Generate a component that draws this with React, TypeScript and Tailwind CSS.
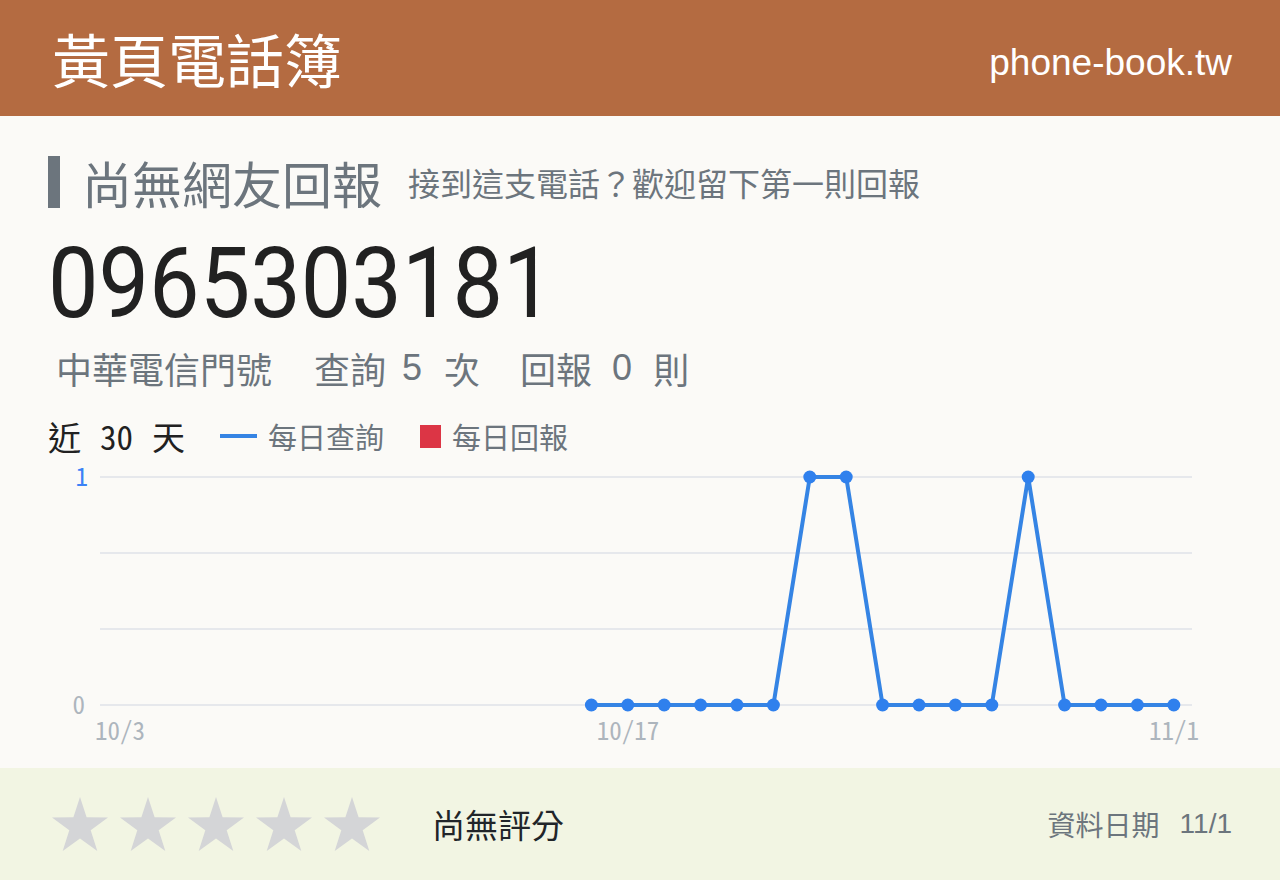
import React from "react";

const CJK = "font-['Noto_Sans_CJK_TC',sans-serif]";

// Daily lookups for the last 30 days (10/3 .. 11/1); null = no data yet
const lookups: (number | null)[] = [
  null, null, null, null, null, null, null, null, null, null, null, null, null,
  0, 0, 0, 0, 0, 0, 1, 1, 0, 0, 0, 0, 1, 0, 0, 0, 0,
];

function Chart() {
  const left = 52;
  const right = 1144;
  const top = 18;
  const bottom = 246;
  const step = (right - left) / lookups.length;
  const xAt = (i: number) => left + step * (i + 0.5);
  const yAt = (v: number) => bottom - (bottom - top) * v;
  const pts = lookups
    .map((v, i) => (v === null ? null : [xAt(i), yAt(v)] as [number, number]))
    .filter((p): p is [number, number] => p !== null);
  const grid = [0, 1, 2, 3].map((k) => top + ((bottom - top) / 3) * k);
  const font = "Noto Sans CJK TC, sans-serif";
  return (
    <svg width="1184" height="296" viewBox="0 0 1184 296" className="block">
      {grid.map((y) => (
        <line key={y} x1={left} x2={right} y1={y} y2={y} stroke="#e6e8ec" strokeWidth="2" />
      ))}
      <text x="40" y={top + 9} textAnchor="end" fontSize="25" fill="#3b82f6" fontFamily={font} style={{ fontFeatureSettings: "'hwid'" }}>1</text>
      <text x="37" y={bottom + 9} textAnchor="end" fontSize="25" fill="#adb5bd" fontFamily={font} style={{ fontFeatureSettings: "'hwid'" }}>0</text>
      {[
        ["10/3", 72],
        ["10/17", 580],
        ["11/1", 1126],
      ].map(([label, x]) => (
        <text
          key={label as string}
          x={x as number}
          y={281}
          textAnchor="middle"
          fontSize="25"
          fill="#adb5bd"
          fontFamily={font}
          style={{ fontFeatureSettings: "'hwid'" }}
        >
          {label}
        </text>
      ))}
      <polyline
        points={pts.map((p) => p.join(",")).join(" ")}
        fill="none"
        stroke="#3584e4"
        strokeWidth="4"
        strokeLinejoin="round"
      />
      {pts.map(([x, y], i) => (
        <circle key={i} cx={x} cy={y} r="6.5" fill="#2f80ed" />
      ))}
    </svg>
  );
}

function Star() {
  return (
    <svg width="56" height="54" viewBox="0 0 56 54">
      <polygon
        points="28,0 34.6,20.3 56,20.6 38.7,33.2 45.3,54 28,41.4 10.7,54 17.3,33.2 0,20.6 21.4,20.3"
        fill="#d4d5d7"
      />
    </svg>
  );
}

export default function App() {
  return (
    <div className={`w-[1280px] h-[880px] flex flex-col bg-[#fbfaf7] ${CJK}`}>
      <header className="h-[116px] shrink-0 bg-[#b46b41] flex items-center justify-between pl-[52px] pr-[48px]">
        <div className="text-white text-[58px] leading-none">黃頁電話簿</div>
        <div className="text-white text-[37px] leading-none pt-[8px] font-['Liberation_Sans',sans-serif]">phone-book.tw</div>
      </header>

      <main className="flex-1 px-[48px] pt-[40px]">
        <div className="flex items-center h-[52px]">
          <div className="w-[12px] h-[52px] bg-[#6c757d]" />
          <h1 className="ml-[22px] text-[50px] leading-none text-[#6c757d]">尚無網友回報</h1>
          <span className="ml-[26px] text-[32px] leading-none text-[#6c757d]">接到這支電話？歡迎留下第一則回報</span>
        </div>

        <div className="mt-[24px] h-[104px] text-[98px] leading-[104px] text-[#212121] font-['Roboto',sans-serif]">
          <span className="inline-block origin-left scale-x-[0.918]">0965303181</span>
        </div>

        <div className="mt-[10px] ml-[8px] text-[36px] leading-[44px] text-[#6c757d] flex items-center">
          <span>中華電信門號</span>
          <span className="ml-[42px]">查詢</span>
          <span className="ml-[16px] font-['Liberation_Sans',sans-serif]">5</span>
          <span className="ml-[22px]">次</span>
          <span className="ml-[40px]">回報</span>
          <span className="ml-[20px] font-['Liberation_Sans',sans-serif]">0</span>
          <span className="ml-[21px]">則</span>
        </div>

        <div className="mt-[28px] flex items-center h-[36px]">
          <span className="text-[33px] leading-none text-[#212121]">近</span>
          <span className="ml-[19px] text-[33px] leading-none text-[#212121] [font-feature-settings:'hwid']">30</span>
          <span className="ml-[19px] text-[33px] leading-none text-[#212121]">天</span>
          <span className="ml-[35px] w-[37px] h-[4px] bg-[#3584e4]" />
          <span className="ml-[11px] text-[29px] leading-none text-[#6c757d]">每日查詢</span>
          <span className="ml-[36px] w-[21px] h-[23px] bg-[#dc3545]" />
          <span className="ml-[11px] text-[29px] leading-none text-[#6c757d]">每日回報</span>
        </div>

        <div className="mt-[5px]">
          <Chart />
        </div>
      </main>

      <footer className="h-[112px] shrink-0 bg-[#f2f5e3] flex items-center pl-[52px] pr-[48px]">
        <div className="flex gap-[12px]">
          {[0, 1, 2, 3, 4].map((i) => (
            <Star key={i} />
          ))}
        </div>
        <span className="ml-[52px] text-[33px] leading-none text-[#212529]">尚無評分</span>
        <span className="ml-auto flex items-center text-[28px] leading-none text-[#6c757d]">
          <span>資料日期</span>
          <span className="ml-[20px] font-['Liberation_Sans',sans-serif]">11/1</span>
        </span>
      </footer>
    </div>
  );
}
